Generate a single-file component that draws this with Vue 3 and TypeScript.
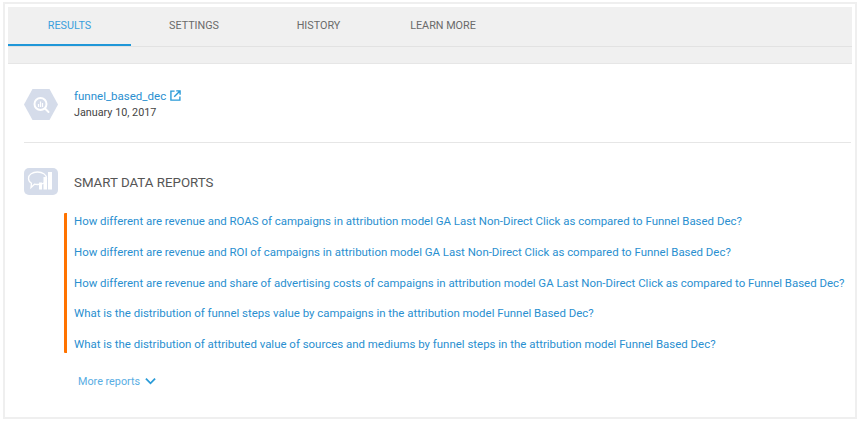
<script setup lang="ts">
const tabs: string[] = ['RESULTS', 'SETTINGS', 'HISTORY', 'LEARN MORE']
const reports: string[] = [
  'How different are revenue and ROAS of campaigns in attribution model GA Last Non-Direct Click as compared to Funnel Based Dec?',
  'How different are revenue and ROI of campaigns in attribution model GA Last Non-Direct Click as compared to Funnel Based Dec?',
  'How different are revenue and share of advertising costs of campaigns in attribution model GA Last Non-Direct Click as compared to Funnel Based Dec?',
  'What is the distribution of funnel steps value by campaigns in the attribution model Funnel Based Dec?',
  'What is the distribution of attributed value of sources and mediums by funnel steps in the attribution model Funnel Based Dec?',
]
</script>

<template>
  <div class="page">
    <div class="card">
      <div class="tabband">
        <nav class="tabs">
          <a v-for="(t, i) in tabs" :key="t" class="tab" :class="{ active: i === 0 }">{{ t }}</a>
        </nav>
      </div>
      <section class="head">
        <svg class="hex" width="34" height="31" viewBox="0 0 34 31">
          <path d="M0 15.500 8.500 0h17L34 15.500 25.500 31h-17z" fill="#d5dcea" />
          <circle cx="16.500" cy="15" r="6" fill="none" stroke="#fff" stroke-width="2" />
          <path d="M14.500 15v3M16.500 12.500V18M18.500 14v4" stroke="#fff" stroke-width="1.200" />
          <path d="M21 19.500l3.500 3.500" stroke="#fff" stroke-width="2" stroke-linecap="round" />
        </svg>
        <div class="meta">
          <div class="name">
            <a>funnel_based_dec</a>
            <svg width="11" height="11" viewBox="0 0 12 12" fill="none" stroke="#2a9bd8" stroke-width="1.500">
              <path d="M5 1.200H1v9.800h9.800V7" />
              <path d="M4.600 7.400 10.600 1.400M6.800 1h4.200v4.200" />
            </svg>
          </div>
          <div class="date">January 10, 2017</div>
        </div>
      </section>
      <section class="smart">
        <div class="smart-title">
          <svg class="chat" width="34" height="27" viewBox="0 0 34 27">
            <rect width="34" height="27" rx="5" fill="#d5dcea" />
            <path d="M4.500 10.500c0-4 4-6.500 9-6.500s9 2.500 9 6.500-4 6-9 6c-1 0-2 0-3-.3L7 19.500l.5-4.300c-2-1.200-3-2.700-3-4.700z" fill="none" stroke="#fff" stroke-width="1.300" />
            <rect x="15" y="14.500" width="3" height="7" fill="#fff" />
            <rect x="19.500" y="9" width="3.500" height="12.500" fill="#fff" />
            <rect x="24" y="4" width="4" height="17.500" fill="#fff" />
          </svg>
          <h2>SMART DATA REPORTS</h2>
        </div>
        <ul class="reports">
          <li v-for="r in reports" :key="r"><a>{{ r }}</a></li>
        </ul>
        <a class="more">
          More reports
          <svg width="11" height="8" viewBox="0 0 12 8" fill="none" stroke="#2a9bd8" stroke-width="2">
            <path d="M1 1.500l5 5 5-5" />
          </svg>
        </a>
      </section>
    </div>
  </div>
</template>

<style scoped>
.page {
  width: 859px;
  height: 421px;
  padding: 2px 2px 2px 3px;
  box-sizing: border-box;
  font-family: Roboto, "Liberation Sans", sans-serif;
  background: #fff;
  overflow: hidden;
}
.card {
  height: 100%;
  box-sizing: border-box;
  border: 2px solid #efefef;
  padding: 3px 3px 0;
}
.tabband {
  height: 57px;
  box-sizing: border-box;
  background: #f0f0f0;
  border-bottom: 1px solid #e6e6e6;
}
.tabs {
  display: flex;
  gap: 1.500px;
  height: 39px;
  border-bottom: 1px solid #e2e2e2;
}
.tab {
  width: 123px;
  text-align: center;
  line-height: 38px;
  height: 39px;
  box-sizing: border-box;
  font-size: 10.800px;
  color: #6a6a6a;
}
.active {
  color: #3a9fdc;
  border-bottom: 2px solid #1f97d8;
}
.head {
  display: flex;
  align-items: center;
  gap: 16px;
  height: 79px;
  margin: 0 1px 0 16px;
  border-bottom: 1px solid #e6e6e6;
  box-sizing: border-box;
  padding-top: 2px;
}
.name {
  display: flex;
  align-items: center;
  gap: 4px;
  font-size: 11.500px;
  line-height: 16px;
  color: #2a8fd0;
}
.date {
  padding-top: 1px;
  font-size: 10.800px;
  line-height: 16px;
  color: #444;
}
.smart {
  padding-left: 16px;
}
.smart-title {
  display: flex;
  align-items: center;
  gap: 16px;
  margin-top: 25px;
}
.smart-title h2 {
  margin: 0;
  padding-top: 1px;
  font-size: 13.300px;
  font-weight: 400;
  color: #555;
}
.reports {
  list-style: none;
  margin: 18px 0 0 40px;
  padding: 0 0 0 7px;
  border-left: 3px solid #ff7300;
  border-radius: 1px;
}
.reports li {
  height: 30.800px;
  font-size: 11.450px;
  line-height: 16px;
  color: #2a8fd0;
  white-space: nowrap;
}
.reports li:last-child {
  height: 16.800px;
}
.more {
  display: flex;
  align-items: center;
  gap: 5px;
  margin: 22px 0 0 54px;
  font-size: 10.800px;
  color: #58ade3;
}
</style>
